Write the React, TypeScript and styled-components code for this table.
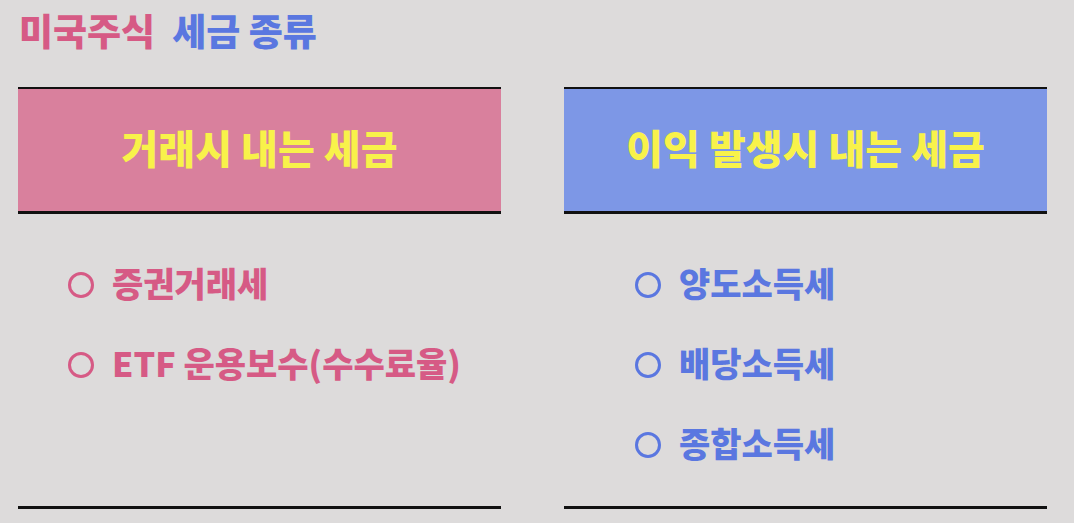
import React from 'react';
import styled, { createGlobalStyle } from 'styled-components';

const pink = '#d65a85';
const blue = '#5a77e0';

const GlobalStyle = createGlobalStyle`
  html, body {
    margin: 0;
    padding: 0;
    background: #dddbdb;
  }
  body {
    font-family: "Noto Sans CJK KR", "Noto Sans", sans-serif;
  }
`;

const Page = styled.div`
  width: 1074px;
  height: 523px;
  box-sizing: border-box;
  padding: 10px 27px 0 18px;
  overflow: hidden;
`;

const Title = styled.h1`
  margin: 0 0 0 1px;
  height: 77px;
  display: flex;
  gap: 17px;
  font-size: 37px;
  font-weight: 900;
  line-height: 40px;
  white-space: pre;
`;

const Tint = styled.span<{ $color: string }>`
  color: ${p => p.$color};
`;

const Columns = styled.div`
  display: grid;
  grid-template-columns: 483px 483px;
  column-gap: 63px;
`;

const Column = styled.section`
  display: flex;
  flex-direction: column;
  height: 419px;
  border-bottom: 3px solid #111;
`;

const Header = styled.div<{ $bg: string }>`
  height: 127px;
  box-sizing: border-box;
  padding-bottom: 6px;
  background: ${p => p.$bg};
  border-top: 2px solid #111;
  border-bottom: 3px solid #111;
  display: flex;
  align-items: center;
  justify-content: center;
  color: #f8f24a;
  font-size: 40px;
  font-weight: 900;
  line-height: 1;
  white-space: pre;
`;

const List = styled.ul<{ $indent: number }>`
  list-style: none;
  margin: 0;
  padding: 29px 0 0 ${p => p.$indent}px;
  flex: 1;
`;

const Item = styled.li<{ $color: string }>`
  height: 80px;
  display: flex;
  align-items: center;
  gap: 18px;
  color: ${p => p.$color};
  font-size: 34px;
  font-weight: 900;
  line-height: 1;
  white-space: pre;
`;

const Ring = styled.span<{ $color: string }>`
  width: 26px;
  height: 26px;
  margin-top: 4px;
  box-sizing: border-box;
  border: 3px solid ${p => p.$color};
  border-radius: 50%;
  flex: none;
`;

type Col = { title: string; bg: string; color: string; indent: number; items: string[] };

const columns: Col[] = [
  { title: '거래시 내는 세금', bg: '#d9809d', color: pink, indent: 50, items: ['증권거래세', 'ETF 운용보수(수수료율)'] },
  { title: '이익 발생시 내는 세금', bg: '#7d97e6', color: blue, indent: 71, items: ['양도소득세', '배당소득세', '종합소득세'] },
];

export default function App() {
  return (
    <>
      <GlobalStyle />
      <Page>
        <Title>
          <Tint $color={pink}>미국주식</Tint>
          <Tint $color={blue}>세금 종류</Tint>
        </Title>
        <Columns>
          {columns.map(col => (
            <Column key={col.title}>
              <Header $bg={col.bg}>{col.title}</Header>
              <List $indent={col.indent}>
                {col.items.map(item => (
                  <Item key={item} $color={col.color}>
                    <Ring $color={col.color} />
                    {item}
                  </Item>
                ))}
              </List>
            </Column>
          ))}
        </Columns>
      </Page>
    </>
  );
}
